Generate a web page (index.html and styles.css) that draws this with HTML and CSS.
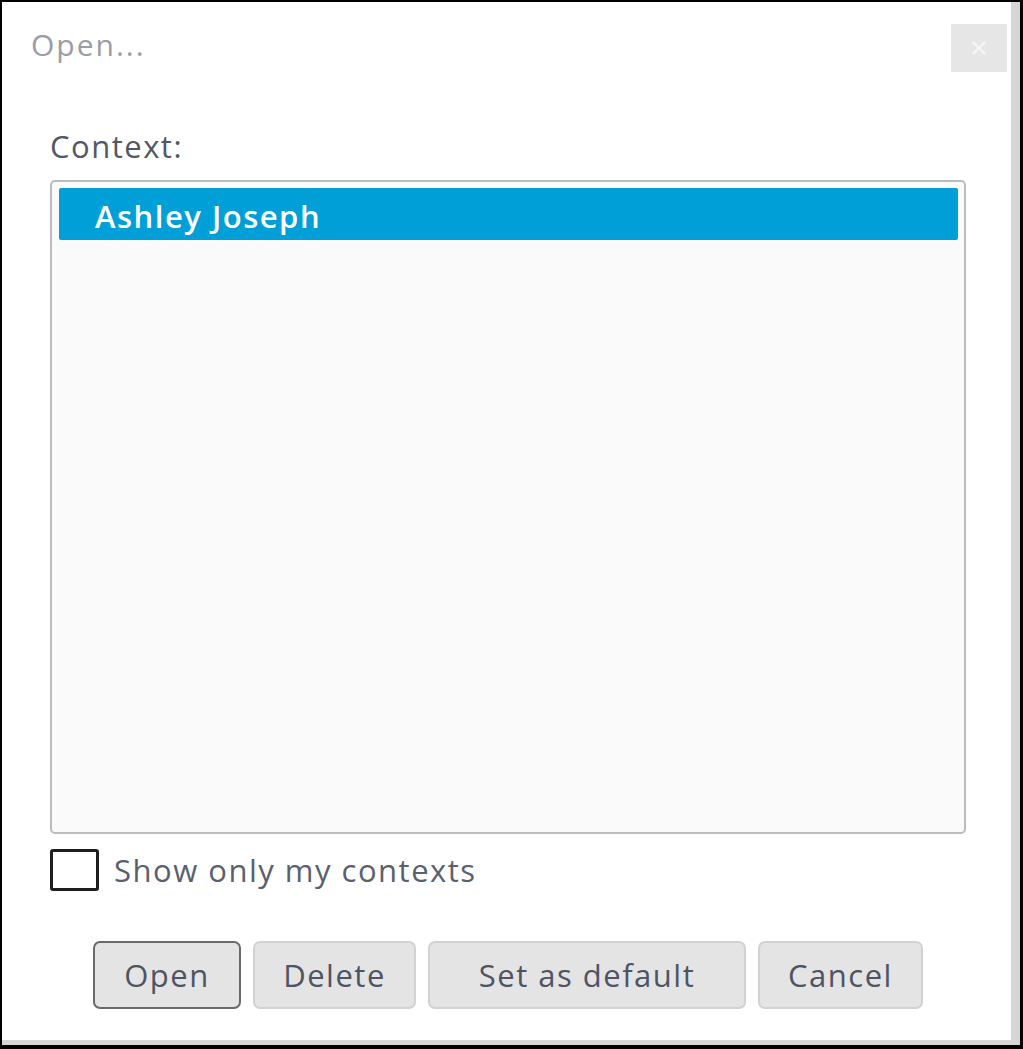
FILE: index.html
```html
<!DOCTYPE html>
<html lang="en">
<head>
<meta charset="utf-8">
<title>Open...</title>
<link rel="stylesheet" href="styles.css">
</head>
<body>
<div class="frame">
  <div class="dialog">
    <div class="header">
      <div class="title">Open...</div>
      <button class="close" type="button" aria-label="Close">
        <svg width="18" height="18" viewBox="0 0 18 18"><path d="M3.5 3.5 L14.5 14.5 M14.5 3.5 L3.5 14.5" stroke="#f4f4f4" stroke-width="2.6" stroke-linecap="round"/></svg>
      </button>
    </div>
    <div class="content">
      <div class="label">Context:</div>
      <div class="listbox">
        <div class="row selected">Ashley Joseph</div>
      </div>
      <label class="check-row">
        <span class="checkbox"></span>
        <span class="check-text">Show only my contexts</span>
      </label>
      <div class="buttons">
        <button class="btn btn-open btn-default" type="button">Open</button>
        <button class="btn btn-delete" type="button">Delete</button>
        <button class="btn btn-setdefault" type="button">Set as default</button>
        <button class="btn btn-cancel" type="button">Cancel</button>
      </div>
    </div>
  </div>
</div>
</body>
</html>
```

FILE: styles.css
```css
* { box-sizing: border-box; }
html, body { margin: 0; padding: 0; background: #fff; }
body { font-family: "Open Sans", "Noto Sans", sans-serif; }

.frame {
  width: 1023px;
  height: 1049px;
  border-style: solid;
  border-color: #000;
  border-width: 2px 3px 4px 2px;
  background: #fff;
}

.dialog {
  height: 100%;
  background: #fff;
  border-right: 9px solid #d6d6d6;
  border-bottom: 5px solid #d6d6d6;
  display: flex;
  flex-direction: column;
}

.header {
  height: 124px;
  display: flex;
  justify-content: space-between;
  align-items: flex-start;
  padding: 22px 4px 0 29px;
}

.title {
  margin-top: 1px;
  font-size: 30px;
  letter-spacing: 2px;
  line-height: 40px;
  color: #9a9ca8;
}

.close {
  width: 56px;
  height: 48px;
  border: none;
  padding: 0;
  background: #e6e6e6;
  display: flex;
  align-items: center;
  justify-content: center;
}

.content {
  padding: 0 45px 0 48px;
  display: flex;
  flex-direction: column;
}

.label {
  font-size: 31px;
  letter-spacing: 1.5px;
  line-height: 40px;
  color: #535866;
  margin-bottom: 14px;
}

.listbox {
  height: 654px;
  border: 2px solid #bcbcc0;
  border-radius: 5px;
  background: #fafafa;
  padding: 6px 6px 0 7px;
}

.row {
  height: 52px;
  line-height: 52px;
  padding: 2px 0 0 36px;
  font-size: 31px;
  letter-spacing: 1.5px;
  font-weight: 600;
  color: #fff;
}

.row.selected {
  background: #009fd8;
  border-radius: 2px;
}

.check-row {
  display: flex;
  align-items: center;
  gap: 15px;
  margin-top: 15px;
}

.checkbox {
  width: 49px;
  height: 42px;
  border: 3px solid #1e1e1e;
  border-radius: 3px;
  background: #fff;
}

.check-text {
  font-size: 31px;
  letter-spacing: 1.5px;
  line-height: 40px;
  color: #5a6070;
}

.buttons {
  display: flex;
  justify-content: center;
  gap: 12px;
  margin-top: 50px;
}

.btn {
  height: 68px;
  font-family: inherit;
  font-size: 31px;
  letter-spacing: 1.5px;
  color: #4e5464;
  background: #e4e4e4;
  border: 2px solid #d2d2d2;
  border-radius: 7px;
  padding: 0;
}

.btn-default { border-color: #6a6a6a; }
.btn-open { width: 148px; }
.btn-delete { width: 163px; }
.btn-setdefault { width: 318px; }
.btn-cancel { width: 165px; }
```
